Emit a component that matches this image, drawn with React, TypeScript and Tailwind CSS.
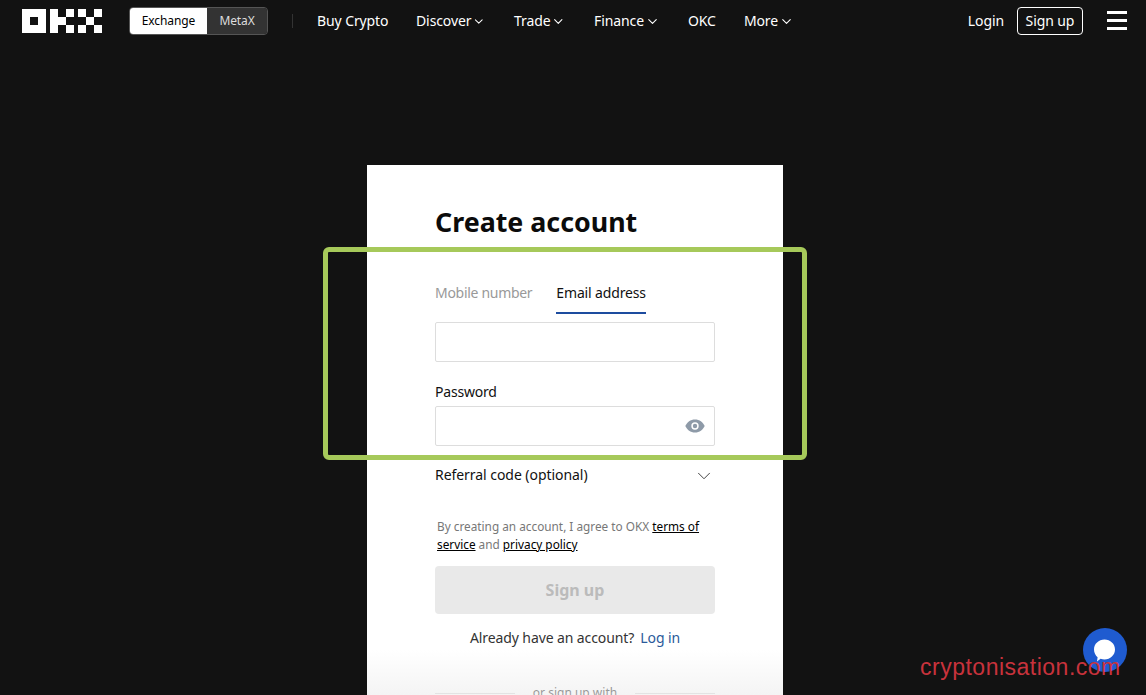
import { ChevronDown } from 'lucide-react';

const navItems = [
    { label: 'Discover', width: 'w-[70px]' },
    { label: 'Trade', width: 'w-[52px]' },
    { label: 'Finance', width: 'w-[66px]' },
];

function OkxLogo() {
    return (
        <svg width="80" height="24" viewBox="0 0 80 24" fill="#fff">
            <path fillRule="evenodd" d="M0 0h24v24H0z M8 8v8h8V8z" />
            <rect x="28" y="0" width="8" height="24" />
            <rect x="36" y="8" width="8" height="8" />
            <rect x="44" y="0" width="8" height="8" />
            <rect x="44" y="16" width="8" height="8" />
            <rect x="56" y="0" width="8" height="8" />
            <rect x="56" y="16" width="8" height="8" />
            <rect x="64" y="8" width="8" height="8" />
            <rect x="72" y="0" width="8" height="8" />
            <rect x="72" y="16" width="8" height="8" />
        </svg>
    );
}

function NavChevron() {
    return <ChevronDown size={15} strokeWidth={1.8} className="ml-[1px] mt-[1px]" />;
}

function EyeIcon() {
    return (
        <svg width="20" height="14" viewBox="0 0 20 14" className="mb-[1px]">
            <path d="M10 .5C5.500.5 2 3.200.3 7 2 10.800 5.500 13.500 10 13.500S18 10.800 19.700 7C18 3.200 14.500.5 10 .5z" fill="#8e9aa8" />
            <circle cx="10" cy="7" r="3.700" fill="#fff" />
            <circle cx="10" cy="7" r="2.200" fill="#8e9aa8" />
        </svg>
    );
}

export default function App() {
    return (
        <div className="relative h-[695px] w-[1146px] overflow-hidden bg-[#121212] font-['Noto_Sans',sans-serif] text-black">
            {/* top nav */}
            <header className="flex h-[41px] items-center pl-[22px] pr-[19px] text-[14px] tracking-[-0.1px] text-white">
                <OkxLogo />
                <div className="ml-[27px] flex h-[28px] w-[139px] overflow-hidden rounded-[4px] border border-[#555] text-[12px]">
                    <div className="flex w-[77px] items-center justify-center bg-white text-black">Exchange</div>
                    <div className="flex flex-1 items-center justify-center bg-[#333] text-[#ddd]">MetaX</div>
                </div>
                <div className="ml-[24px] h-[14px] w-px bg-[#333]"></div>
                <span className="ml-[24px] w-[72px] whitespace-nowrap">Buy Crypto</span>
                <nav className="ml-[27px] flex items-center gap-x-[28px]">
                    {navItems.map((item) => (
                        <div key={item.label} className={`flex items-center ${item.width}`}>
                            {item.label}
                            <NavChevron />
                        </div>
                    ))}
                    <span>OKC</span>
                    <div className="flex items-center">
                        More
                        <NavChevron />
                    </div>
                </nav>
                <span className="ml-auto">Login</span>
                <div className="ml-[13px] flex h-[28px] w-[66px] items-center justify-center rounded-[4px] border border-white">Sign up</div>
                <div className="ml-[24px] flex w-[20px] flex-col gap-y-[5px]">
                    <div className="h-[3px] bg-white"></div>
                    <div className="h-[3px] bg-white"></div>
                    <div className="h-[3px] bg-white"></div>
                </div>
            </header>

            {/* signup card */}
            <main className="ml-[367px] mt-[124px] h-[600px] w-[416px] bg-white px-[68px] pt-[40px]">
                <h1 className="text-[26.8px] font-bold leading-[34px] text-[#0b0b0b]">Create account</h1>
                <div className="mt-[44px] flex gap-x-[24px] text-[14px] leading-[20px]">
                    <div className="tracking-[-0.3px] text-[#999]">Mobile number</div>
                    <div className="h-[31px] border-b-2 border-[#1d4c9f] tracking-[-0.15px] text-[#111]">Email address</div>
                </div>
                <div className="mt-[8px] h-[40px] w-[280px] rounded-[2px] border border-[#ddd]"></div>
                <div className="mt-[20px] text-[14px] leading-[20px] tracking-[-0.2px] text-[#111]">Password</div>
                <div className="mt-[4px] flex h-[40px] w-[280px] items-center justify-end rounded-[2px] border border-[#ddd] pr-[9px]">
                    <EyeIcon />
                </div>
                <div className="mt-[17px] flex w-[280px] items-center justify-between text-[14px] leading-[20px] tracking-[-0.05px] text-[#111]">
                    Referral code (optional)
                    <ChevronDown size={22} strokeWidth={1} className="mt-[2px] text-[#333]" />
                </div>
                <p className="ml-[2px] mt-[30px] w-[278px] text-[11.8px] leading-[18px] text-[#777]">
                    By creating an account, I agree to OKX <span className="text-black underline">terms of service</span> and <span className="text-black underline">privacy policy</span>
                </p>
                <div className="mt-[13px] flex h-[48px] w-[280px] items-center justify-center rounded-[4px] bg-[#e9e9e9] text-[16px] font-bold text-[#bbb]">Sign up</div>
                <div className="mt-[14px] flex w-[280px] justify-center gap-x-[6px] text-[14px] leading-[20px] tracking-[-0.1px] text-[#333]">
                    Already have an account?
                    <span className="text-[#2a5a9a]">Log in</span>
                </div>
                <div className="mt-[37px] flex w-[280px] items-center justify-between text-[12px] leading-[16px] text-[#555]">
                    <div className="h-px w-[80px] bg-[#ddd]"></div>
                    or sign up with
                    <div className="h-px w-[80px] bg-[#ddd]"></div>
                </div>
            </main>

            {/* fade at the bottom of the card */}
            <div className="absolute bottom-0 left-[367px] h-[45px] w-[416px] bg-gradient-to-b from-transparent to-[#e9e9e9]/50"></div>

            {/* highlight box */}
            <div className="absolute left-[323px] top-[247px] h-[213px] w-[484px] rounded-[6px] border-[5px] border-[#a6c95a]"></div>

            {/* chat button */}
            <div className="absolute left-[1083px] top-[628px] flex h-[44px] w-[44px] items-center justify-center rounded-full bg-[#1f5bd0]">
                <svg width="26" height="26" viewBox="0 0 26 26" fill="#fff">
                    <path d="M12.500 2.500c5.800 0 10.500 4.400 10.500 10s-4.700 10-10.500 10c-1.400 0-2.700-.2-3.900-.7L5 24.500l.6-4.200C3.400 18.400 2 15.600 2 12.500c0-5.600 4.700-10 10.500-10z" />
                </svg>
            </div>

            {/* watermark */}
            <div className="absolute left-[920px] top-[653px] font-['Liberation_Sans',sans-serif] text-[23px] leading-[28px] tracking-[0.5px] text-[#c8323c]">cryptonisation.com</div>
        </div>
    );
}
